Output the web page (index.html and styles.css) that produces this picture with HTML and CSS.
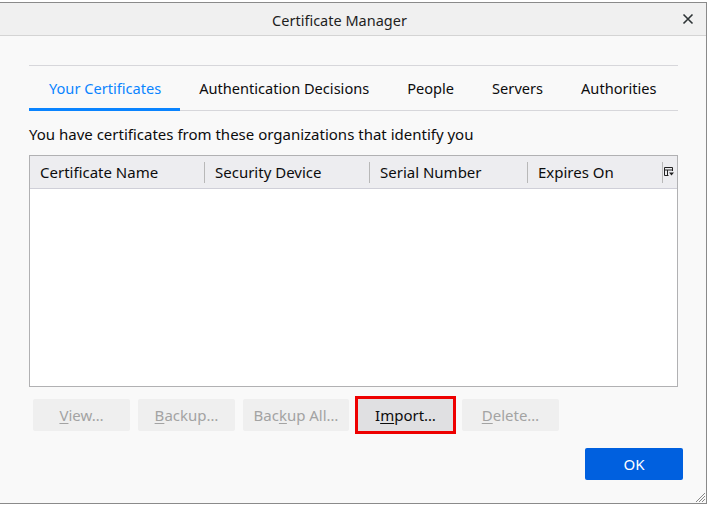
FILE: index.html
```html
<!DOCTYPE html>
<html>
<head>
<meta charset="utf-8">
<link rel="stylesheet" href="styles.css">
</head>
<body>
<div class="window">
  <div class="titlebar">
    <span class="title">Certificate Manager</span>
    <span class="close">
      <svg width="12" height="12" viewBox="0 0 12 12"><path d="M1.5 1.5L10.5 10.5M10.5 1.5L1.5 10.5" stroke="#2e3436" stroke-width="1.6" fill="none"/></svg>
    </span>
  </div>
  <div class="content">
    <div class="tabs">
      <div class="tab active">Your Certificates</div>
      <div class="tab">Authentication Decisions</div>
      <div class="tab">People</div>
      <div class="tab">Servers</div>
      <div class="tab">Authorities</div>
    </div>
    <p class="desc">You have certificates from these organizations that identify you</p>
    <div class="table">
      <div class="thead">
        <div class="col c1">Certificate Name</div>
        <div class="col c2">Security Device</div>
        <div class="col c3">Serial Number</div>
        <div class="col c4">Expires On</div>
        <div class="picker">
          <svg width="10" height="10" viewBox="0 0 10 10"><path d="M0.5 0.5H8.5V4M0.5 0.5V8.5H4.5M0.5 3H8.5M3.5 3V8.5" stroke="#222" stroke-width="1" fill="none"/><path d="M5 5.5H10L7.5 8.5Z" fill="#222"/></svg>
        </div>
      </div>
      <div class="tbody"></div>
    </div>
    <div class="buttons">
      <button class="btn disabled w97"><u>V</u>iew…</button>
      <button class="btn disabled w97"><u>B</u>ackup…</button>
      <button class="btn disabled w106">Bac<u>k</u>up All…</button>
      <button class="btn import w95">I<u>m</u>port…</button>
      <button class="btn disabled w97"><u>D</u>elete…</button>
    </div>
    <div class="footer">
      <button class="ok">OK</button>
    </div>
  </div>
  <svg class="grip" width="10" height="10" viewBox="0 0 10 10"><path d="M10 1L1 10M10 4L4 10M10 7L7 10" stroke="#888" stroke-width="1" fill="none"/></svg>
</div>
</body>
</html>
```
FILE: styles.css
```css
* { box-sizing: border-box; }
html, body { margin: 0; padding: 0; }
body {
  width: 708px;
  height: 505px;
  overflow: hidden;
  background: #ffffff;
  font-family: "Noto Sans", "Open Sans", sans-serif;
}
.window {
  position: relative;
  margin-top: 2px;
  width: 707px;
  height: 502px;
  border: 1px solid #8a8a8a;
  border-left: none;
  display: flex;
  flex-direction: column;
  background: #f9f9f9;
}
.titlebar {
  height: 33px;
  flex: none;
  background: #f0f0f0;
  border-bottom: 1px solid #d4d4d4;
  display: flex;
  align-items: center;
  justify-content: center;
  position: relative;
}
.title {
  font-size: 14.5px;
  color: #1e1e1e;
  margin-left: -27px;
  margin-top: 1px;
}
.close {
  position: absolute;
  right: 12px;
  top: 10px;
  display: flex;
}
.content {
  flex: 1;
  padding: 29px 28px 0 29px;
  display: flex;
  flex-direction: column;
}
.tabs {
  display: flex;
  border-top: 1px solid #d7d7db;
  border-bottom: 1px solid #d7d7db;
  height: 46px;
}
.tab {
  flex: none;
  white-space: nowrap;
  padding: 0 19px;
  font-size: 14.6px;
  color: #0c0c0d;
  display: flex;
  align-items: center;
  border-bottom: 2px solid transparent;
  margin-bottom: -1px;
  padding-top: 1px;
}
.tab.active {
  color: #0a84ff;
  border-bottom: 3px solid #0a84ff;
  padding-top: 2px;
  padding-left: 20px;
  padding-right: 19px;
}
.desc {
  margin: 13px 0 0 0;
  font-size: 15px;
  color: #0c0c0d;
  line-height: 20px;
  white-space: nowrap;
}
.table {
  margin-top: 11px;
  height: 232px;
  flex: none;
  border: 1px solid #b1b1b3;
  background: #ffffff;
  display: flex;
  flex-direction: column;
}
.thead {
  height: 33px;
  flex: none;
  background: #ededf0;
  border-bottom: 1px solid #cfcfd8;
  display: flex;
  align-items: center;
}
.col {
  font-size: 15px;
  color: #0c0c0d;
  padding-left: 10px;
  height: 21px;
  line-height: 21px;
  border-right: 1px solid #b8b8b8;
  white-space: nowrap;
}
.c1 { width: 175px; }
.c2 { width: 165px; }
.c3 { width: 158px; }
.c4 { width: 135px; }
.picker {
  flex: 1;
  display: flex;
  justify-content: center;
  align-items: center;
  padding-right: 2px;
}
.tbody { flex: 1; }
.buttons {
  display: flex;
  gap: 8px;
  margin-top: 12px;
  padding-left: 4px;
}
.btn {
  height: 32px;
  border: none;
  border-radius: 2px;
  font-family: inherit;
  font-size: 15px;
  padding: 0;
  text-align: center;
  white-space: nowrap;
}
.btn u { text-underline-offset: 2px; }
.w97 { width: 97px; }
.w106 { width: 106px; }
.w95 { width: 95px; }
.disabled {
  background: #efefef;
  color: #a3a3a3;
}
.import {
  background: #e0e0e2;
  color: #0c0c0d;
  border-radius: 0;
  outline: 3px solid #ee0000;
  outline-offset: 0;
  margin-left: 1px;
}
.import + .btn { margin-left: 1px; }
.footer {
  display: flex;
  justify-content: flex-end;
  margin-top: 17px;
  margin-right: -5px;
}
.ok {
  width: 98px;
  height: 32px;
  border: none;
  border-radius: 2px;
  background: #0060df;
  color: #ffffff;
  font-family: inherit;
  font-size: 15px;
}
.grip {
  position: absolute;
  right: 1px;
  bottom: 1px;
}
```
